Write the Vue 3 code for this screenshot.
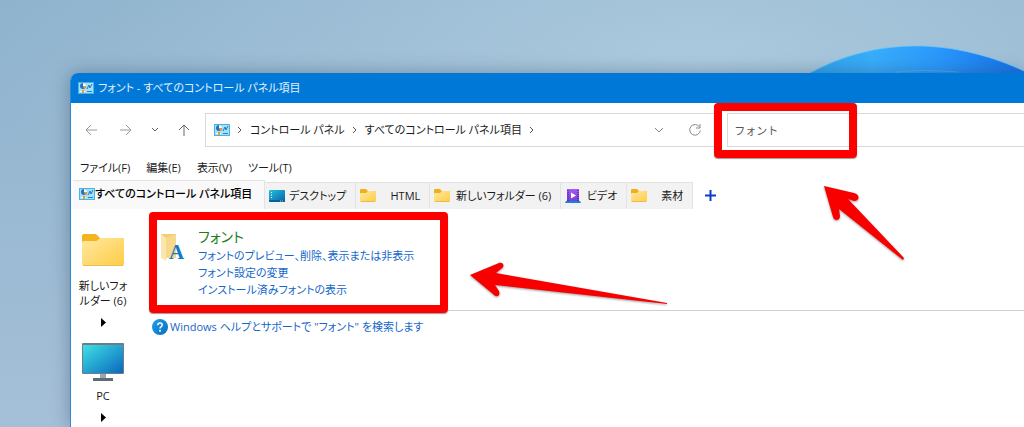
<script setup>
import { ref } from 'vue'

const query = ref('フォント')
const menus = ['ファイル(F)', '編集(E)', '表示(V)', 'ツール(T)']
const tabs = [
  { label: 'すべてのコントロール パネル項目', icon: 'panel', size: 'xl' },
  { label: 'デスクトップ', icon: 'desktop', size: 'md' },
  { label: 'HTML', icon: 'folder', size: 'sm' },
  { label: '新しいフォルダー (6)', icon: 'folder', size: 'lg' },
  { label: 'ビデオ', icon: 'video', size: 'xs' },
  { label: '素材', icon: 'folder', size: 'xs' },
]
const active = ref(0)
</script>

<template>
  <div class="desktop">
    <svg width="0" height="0" class="defs" aria-hidden="true">
      <defs>
        <linearGradient id="gFolder" x1="0" y1="0" x2="1" y2="1">
          <stop offset="0" stop-color="#ffe9a2" />
          <stop offset="1" stop-color="#ffcc45" />
        </linearGradient>
        <linearGradient id="gScreen" x1="0" y1="0" x2="1" y2="1">
          <stop offset="0" stop-color="#3fe0e6" />
          <stop offset="1" stop-color="#0a68bd" />
        </linearGradient>
        <linearGradient id="gDesk" x1="0" y1="0" x2="1" y2="1">
          <stop offset="0" stop-color="#22c3dc" />
          <stop offset="1" stop-color="#0a5ea8" />
        </linearGradient>
        <linearGradient id="gVideo" x1="0" y1="0" x2="0" y2="1">
          <stop offset="0" stop-color="#a45cf0" />
          <stop offset="1" stop-color="#7d3bd8" />
        </linearGradient>
        <linearGradient id="gHelp" x1="0" y1="0" x2="1" y2="1">
          <stop offset="0" stop-color="#1fa0ea" />
          <stop offset="1" stop-color="#0a6cc0" />
        </linearGradient>
        <linearGradient id="gBloom" x1="0" y1="0" x2="1" y2="0">
          <stop offset="0" stop-color="#2fa2ec" />
          <stop offset="0.3" stop-color="#38adfa" />
          <stop offset="0.6" stop-color="#2a98fb" />
          <stop offset="1" stop-color="#1470e8" />
        </linearGradient>
        <symbol id="panel" viewBox="0 0 16 12">
          <rect width="16" height="12" fill="#45b4e8" />
          <rect x="1" y="1" width="14" height="10" fill="#a5e0f8" />
          <circle cx="5" cy="4" r="3" fill="#1f74c4" />
          <path d="M5 4V1a3 3 0 0 1 3 3z" fill="#fff" />
          <path d="M5 4l3 0a3 3 0 0 1-2 3z" fill="#f39a24" />
          <path d="M9 7l2-4 1 3 2-4" fill="none" stroke="#1f74c4" />
          <path d="M2 9.500h5" stroke="#fff" />
          <path d="M5 8v3" stroke="#f39a24" stroke-width="2" />
          <path d="M9 9.500h5" stroke="#2483cf" />
        </symbol>
        <symbol id="folder" viewBox="0 0 16 14">
          <path d="M0 1q0-1 1-1h5l2 2h7q1 0 1 1v3H0z" fill="#eeb01c" />
          <path d="M0 5q0-1 1-1h5l2-2h7q1 0 1 1v9q0 1-1 1H1q-1 0-1-1z" fill="url(#gFolder)" />
          <path d="M1 12.500h14" stroke="#eebb40" />
        </symbol>
        <symbol id="desktop" viewBox="0 0 16 14">
          <rect y="1" width="16" height="12" rx="1" fill="url(#gDesk)" />
          <path d="M2 3h1v1H2zM2 5.500h1v1H2zM2 8h1v1H2z" fill="#fff" />
          <path d="M0 11h16v1q0 1-1 1H1q-1 0-1-1z" fill="#0b5e9c" />
          <path d="M11 12h1M13 12h1" stroke="#9fd8f4" />
        </symbol>
        <symbol id="video" viewBox="0 0 16 14">
          <rect x="2" width="12" height="12" fill="url(#gVideo)" />
          <path d="M3 1v11M13 1v11" stroke="#3b1a78" stroke-dasharray="1 1" />
          <path d="M6 3.500l5 3-5 3z" fill="#fff" />
          <path d="M1 12h14l1 2H0z" fill="#1384dc" />
        </symbol>
      </defs>
    </svg>

    <svg class="bloom" viewBox="0 0 216 30" width="216" height="30" aria-hidden="true">
      <path d="M0 30C34 11 70 2 108 2C148 2 186 13 216 27V30H0Z" fill="url(#gBloom)" />
      <path d="M2 29C36 11 70 2 108 2C148 2 186 13 216 27" fill="none" stroke="#62c8fb" stroke-opacity=".7" />
      <path d="M88 28Q112 25 150 28" fill="none" stroke="#63bdfb" stroke-opacity=".5" />
    </svg>

    <main class="window">
      <header class="titlebar">
        <svg class="panel-icon"><use href="#panel" /></svg>
        <h1>フォント - すべてのコントロール パネル項目</h1>
      </header>

      <div class="nav">
        <div class="buttons">
          <button class="wide" aria-label="戻る">
            <svg width="14" height="14" viewBox="0 0 14 14"><path d="M13 7H2M7 2L2 7l5 5" stroke="#999" /></svg>
          </button>
          <button aria-label="進む">
            <svg width="14" height="14" viewBox="0 0 14 14"><path d="M1 7h11M7 2l5 5-5 5" stroke="#999" /></svg>
          </button>
          <button class="slim" aria-label="最近の場所">
            <svg width="8" height="8" viewBox="0 0 8 8"><path d="M1 2l3 3 3-3" stroke="#666" /></svg>
          </button>
          <button aria-label="上へ">
            <svg width="14" height="14" viewBox="0 0 14 14"><path d="M7 13V2M2 7l5-5 5 5" stroke="#666" /></svg>
          </button>
        </div>
        <div class="bars">
          <nav class="address" aria-label="アドレス">
            <svg class="panel-icon"><use href="#panel" /></svg>
            <svg class="sep" viewBox="0 0 6 8"><path d="M1 1l3 3-3 3" /></svg>
            <a href="#">コントロール パネル</a>
            <svg class="sep" viewBox="0 0 6 8"><path d="M1 1l3 3-3 3" /></svg>
            <a href="#">すべてのコントロール パネル項目</a>
            <svg class="sep" viewBox="0 0 6 8"><path d="M1 1l3 3-3 3" /></svg>
            <div class="tools">
              <button class="wide" aria-label="履歴">
                <svg width="10" height="10" viewBox="0 0 10 10"><path d="M1 3l4 4 4-4" stroke="#888" /></svg>
              </button>
              <button class="wide" aria-label="更新">
                <svg width="14" height="14" viewBox="0 0 14 14"><path d="M11.500 4A5.300 5.300 0 1 0 12.300 7.500M12 1v4H8" stroke="#888" /></svg>
              </button>
            </div>
          </nav>
          <div class="search">
            <input v-model="query" type="text" aria-label="検索" />
            <div class="mark"></div>
            <svg class="arrow" width="84" height="78" viewBox="0 0 84 78" aria-hidden="true">
              <path d="M2 2L32 9C38 10 38 17 32 17L26 15L82 74L81 76L17 25L18 32C18 37 12 37 11 33Z" />
            </svg>
          </div>
        </div>
      </div>

      <div class="menubar">
        <button v-for="m in menus" :key="m">{{ m }}</button>
      </div>

      <div class="tabs" role="tablist">
        <button
          v-for="(t, i) in tabs"
          :key="t.label"
          role="tab"
          :aria-selected="i === active"
          :class="['tab', t.size, { active: i === active }]"
          @click="active = i"
        >
          <svg :class="t.icon === 'panel' ? 'panel-icon' : 'tab-icon'"><use :href="'#' + t.icon" /></svg>
          <span>{{ t.label }}</span>
        </button>
        <button class="add" aria-label="新しいタブ">
          <svg width="11" height="11" viewBox="0 0 11 11"><path d="M5.500 0v11M0 5.500h11" stroke="#0a3ccc" stroke-width="2" /></svg>
        </button>
      </div>

      <div class="body">
        <aside class="places">
          <a href="#" class="place">
            <svg width="42" height="34" viewBox="0 0 42 34">
              <path d="M0 3q0-2 2-2h11q1 0 2 1l3 3h22q2 0 2 2v8H0z" fill="#f3b41e" />
              <path d="M0 10q0-2 2-2h12q1 0 2-1l1-1q1-1 2-1h21q2 0 2 2v24q0 2-2 2H2q-2 0-2-2z" fill="url(#gFolder)" />
              <path d="M1 32.500h40" stroke="#eebf4c" />
            </svg>
            <span>新しいフォルダー (6)</span>
          </a>
          <svg class="caret" viewBox="0 0 5 9"><path d="M0 0l5 4.500L0 9z" /></svg>
          <a href="#" class="place pc">
            <svg width="42" height="38" viewBox="0 0 42 38">
              <rect width="42" height="31" rx="1" fill="#6e7c86" />
              <rect x="1" y="2" width="40" height="28" fill="url(#gScreen)" />
              <rect x="18" y="31" width="6" height="5" fill="#9aa7b0" />
              <rect x="11" y="35" width="20" height="3" fill="#5f6c76" />
            </svg>
            <span>PC</span>
          </a>
          <svg class="caret" viewBox="0 0 5 9"><path d="M0 0l5 4.500L0 9z" /></svg>
        </aside>

        <section class="results">
          <div class="result">
            <svg width="26" height="30" viewBox="0 0 26 30" aria-hidden="true">
              <path d="M1 1h15v24H4z" fill="#f2cf77" />
              <path d="M1 1l5 4v23l-5-3z" fill="#fbe7ae" />
              <path d="M6 5l10-4v24H6z" fill="#f6d98b" />
              <text x="9" y="26" class="letter">A</text>
            </svg>
            <div class="links">
              <h2><a href="#">フォント</a></h2>
              <a href="#">フォントのプレビュー、削除、表示または非表示</a>
              <a href="#">フォント設定の変更</a>
              <a href="#">インストール済みフォントの表示</a>
            </div>
            <div class="mark"></div>
            <svg class="arrow" width="202" height="46" viewBox="0 0 202 46" aria-hidden="true">
              <path d="M2 15L31 3C36 2 37 7 33 9L28 13L199 43L199 44L27 25L31 31C33 36 28 38 25 34Z" />
            </svg>
          </div>
          <a href="#" class="help">
            <svg width="16" height="16" viewBox="0 0 16 16" aria-hidden="true">
              <circle cx="8" cy="8" r="8" fill="url(#gHelp)" />
              <path d="M5.800 6.200Q5.800 4 8 4T10.200 6Q10.200 7 9 7.800Q8 8.400 8 9.600" fill="none" stroke="#fff" stroke-width="1.500" />
              <circle cx="8" cy="11.800" r="1" fill="#fff" />
            </svg>
            <span>Windows ヘルプとサポートで "フォント" を検索します</span>
          </a>
        </section>
      </div>
    </main>
  </div>
</template>

<style>
body {
  margin: 0;
}
</style>

<style scoped>
.desktop {
  position: relative;
  box-sizing: border-box;
  display: flex;
  flex-direction: column;
  min-height: 100vh;
  padding: 73px 0 0 70px;
  overflow: hidden;
  background:
    radial-gradient(ellipse 700px 300px at 68% 16%, #abc9de, rgba(171, 201, 222, 0)),
    linear-gradient(180deg, #8fb3cd, #a5bfd8);
  font: 11px/16px "Open Sans", "Noto Sans CJK JP", sans-serif;
  font-feature-settings: "palt";
  color: #1a1a1a;
}
.defs {
  position: absolute;
}
.bloom {
  position: absolute;
  top: 44px;
  right: 0;
}
.window {
  position: relative;
  flex: 1;
  display: flex;
  flex-direction: column;
  border-left: 1px solid #2b8bd8;
  border-radius: 8px 0 0 0;
  background: #fff;
  box-shadow: 0 0 18px rgba(40, 60, 85, 0.4);
}
button {
  display: flex;
  align-items: center;
  justify-content: center;
  padding: 0;
  border: 0;
  background: none;
  font: inherit;
  font-feature-settings: inherit;
  color: inherit;
  white-space: nowrap;
}
button svg {
  flex: none;
  fill: none;
}
a {
  color: inherit;
  text-decoration: none;
  white-space: nowrap;
}
h1,
h2 {
  margin: 0;
  font-weight: 400;
}
.panel-icon {
  flex: none;
  width: 16px;
  height: 12px;
}
.titlebar {
  display: flex;
  align-items: center;
  gap: 4px;
  height: 30px;
  padding-left: 7px;
  border-radius: 7px 0 0 0;
  background: #0078d7;
  color: #e4f1fc;
}
.titlebar h1 {
  font-size: 11px;
}
.nav {
  display: flex;
  padding: 10px 0 0 2px;
}
.buttons {
  display: flex;
  margin-right: 4px;
}
.buttons button {
  width: 34px;
}
.buttons .slim {
  width: 24px;
}
.buttons .wide,
.tools .wide {
  width: 36px;
}
.bars {
  flex: 1;
  display: grid;
  grid-template-columns: 19fr 11fr;
  gap: 10px;
}
.address {
  display: flex;
  align-items: center;
  height: 32px;
  padding: 0 3px 0 8px;
  border: 1px solid #d9d9d9;
}
.sep {
  flex: none;
  width: 6px;
  height: 8px;
  margin: 0 7px;
  fill: none;
  stroke: #555;
}
.tools {
  display: flex;
  margin-left: auto;
}
.search {
  position: relative;
  display: flex;
}
.search input {
  flex: 1;
  min-width: 0;
  padding: 0 6px;
  border: 1px solid #d9d9d9;
  border-right: 0;
  outline: 0;
  background: #fff;
  font: 11px/16px "Noto Sans CJK JP", sans-serif;
  color: #555;
}
.mark {
  position: absolute;
  box-sizing: border-box;
  border: 8px solid #fe0000;
  border-radius: 4px;
  box-shadow: 0 1px 1px rgba(0, 0, 0, 0.4);
  pointer-events: none;
}
.arrow {
  position: absolute;
  fill: #f90000;
  filter: drop-shadow(0 1px 1px rgba(0, 0, 0, 0.4));
  pointer-events: none;
}
.search .mark {
  top: -10px;
  left: -13px;
  width: 143px;
  height: 55px;
}
.search .arrow {
  top: 71px;
  left: 95px;
}
.menubar {
  display: flex;
  gap: 16px;
  height: 25px;
  margin-top: 8px;
  padding-left: 9px;
}
.tabs {
  display: flex;
  align-items: flex-end;
  padding-left: 2px;
}
.tab {
  box-sizing: border-box;
  justify-content: space-between;
  height: 27px;
  padding: 0 9px 0 4px;
  border: solid #e3e3e3;
  border-width: 1px 1px 0 0;
  background: #f2f2f2;
}
.tab.active {
  height: 29px;
  padding: 0 12px 2px 6px;
  background: #f9f9f9;
  font-weight: 500;
  color: #000;
}
.tab-icon {
  width: 16px;
  height: 14px;
}
.xl {
  min-width: 192px;
}
.lg {
  min-width: 131px;
}
.md {
  min-width: 91px;
}
.sm {
  min-width: 74px;
}
.xs {
  min-width: 66px;
}
.add {
  width: 35px;
  height: 28px;
}
.body {
  display: flex;
  gap: 17px;
}
.places {
  display: flex;
  flex-direction: column;
  align-items: center;
  width: 64px;
  padding-top: 24px;
}
.place {
  display: flex;
  flex-direction: column;
  align-items: center;
  gap: 11px;
  width: 52px;
  line-height: 15px;
  text-align: center;
  white-space: normal;
  word-break: break-all;
}
.place.pc {
  gap: 7px;
  margin-top: 16px;
}
.caret {
  width: 5px;
  height: 9px;
  margin-top: 10px;
}
.results {
  flex: 1;
}
.result {
  position: relative;
  box-sizing: border-box;
  display: flex;
  gap: 12px;
  min-height: 102px;
  padding: 24px 0 12px 8px;
  border-bottom: 1px solid #cfcfcf;
}
.letter {
  font: 700 21px "Liberation Serif", serif;
  fill: #1479c9;
}
.links {
  display: flex;
  flex-direction: column;
  align-items: flex-start;
  line-height: 17px;
  color: #1567c8;
}
.links h2 {
  margin-top: -6px;
  font-size: 14px;
  line-height: 20px;
  color: #1a7f1a;
}
.result .mark {
  top: 3px;
  left: -3px;
  width: 299px;
  height: 101px;
}
.result .arrow {
  top: 51px;
  left: 316px;
}
.help {
  display: flex;
  align-items: center;
  gap: 2px;
  margin-top: 8px;
  color: #1567c8;
}
</style>
